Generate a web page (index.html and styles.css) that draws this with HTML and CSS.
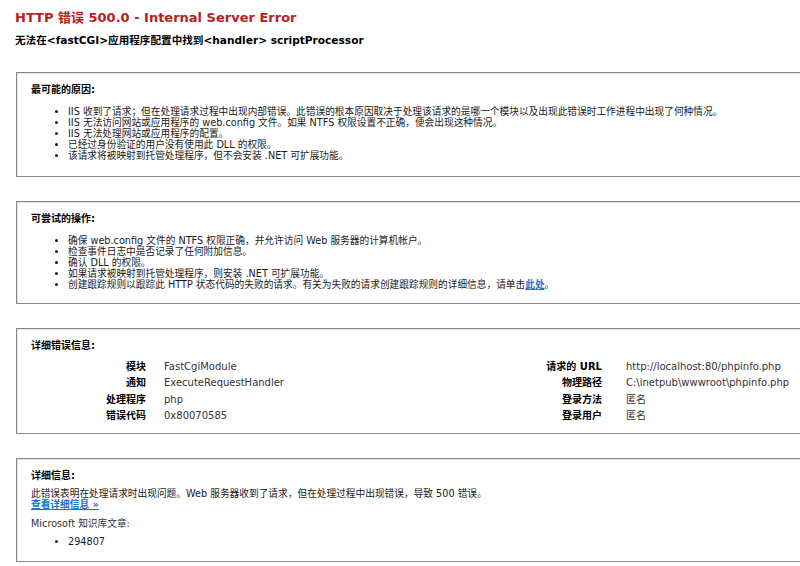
FILE: index.html
```html
<!DOCTYPE html>
<html lang="zh-CN">
<head>
<meta charset="utf-8">
<title>IIS 7.0 详细错误 - 500.0 - Internal Server Error</title>
<link rel="stylesheet" href="styles.css">
</head>
<body>
<div class="header">
  <h1 class="title">HTTP 错误 500.0 - Internal Server Error</h1>
  <h2 class="subtitle">无法在&lt;fastCGI&gt;应用程序配置中找到&lt;handler&gt; scriptProcessor</h2>
</div>
<div class="content">
  <section class="box box-causes">
    <h3 class="box-title">最可能的原因:</h3>
    <ul class="list">
      <li>IIS 收到了请求；但在处理请求过程中出现内部错误。此错误的根本原因取决于处理该请求的是哪一个模块以及出现此错误时工作进程中出现了何种情况。</li>
      <li>IIS 无法访问网站或应用程序的 web.config 文件。如果 NTFS 权限设置不正确，便会出现这种情况。</li>
      <li>IIS 无法处理网站或应用程序的配置。</li>
      <li>已经过身份验证的用户没有使用此 DLL 的权限。</li>
      <li>该请求将被映射到托管处理程序，但不会安装 .NET 可扩展功能。</li>
    </ul>
  </section>
  <section class="box box-actions">
    <h3 class="box-title">可尝试的操作:</h3>
    <ul class="list">
      <li>确保 web.config 文件的 NTFS 权限正确，并允许访问 Web 服务器的计算机帐户。</li>
      <li>检查事件日志中是否记录了任何附加信息。</li>
      <li>确认 DLL 的权限。</li>
      <li>如果请求被映射到托管处理程序，则安装 .NET 可扩展功能。</li>
      <li>创建跟踪规则以跟踪此 HTTP 状态代码的失败的请求。有关为失败的请求创建跟踪规则的详细信息，请单击<a class="link" href="#">此处</a>。</li>
    </ul>
  </section>
  <section class="box box-details">
    <h3 class="box-title">详细错误信息:</h3>
    <div class="details">
      <div class="label">模块</div><div class="value">FastCgiModule</div>
      <div class="label label-right">请求的 URL</div><div class="value value-right">http://localhost:80/phpinfo.php</div>
      <div class="label">通知</div><div class="value">ExecuteRequestHandler</div>
      <div class="label label-right">物理路径</div><div class="value value-right">C:\inetpub\wwwroot\phpinfo.php</div>
      <div class="label">处理程序</div><div class="value">php</div>
      <div class="label label-right">登录方法</div><div class="value value-right">匿名</div>
      <div class="label">错误代码</div><div class="value">0x80070585</div>
      <div class="label label-right">登录用户</div><div class="value value-right">匿名</div>
    </div>
  </section>
  <section class="box box-info">
    <h3 class="box-title">详细信息:</h3>
    <p class="info-text">此错误表明在处理请求时出现问题。Web 服务器收到了请求，但在处理过程中出现错误，导致 500 错误。</p>
    <p class="info-link"><a class="link" href="#">查看详细信息 »</a></p>
    <p class="kb">Microsoft 知识库文章:</p>
    <ul class="list kb-list">
      <li>294807</li>
    </ul>
  </section>
</div>
</body>
</html>
```
FILE: styles.css
```css
html, body {
  margin: 0;
  padding: 0;
  background: #ffffff;
  overflow: hidden;
}
body {
  font-family: "DejaVu Sans", Verdana, "Noto Sans CJK SC", sans-serif;
  font-size: 9.7px;
  color: #1a1a1a;
}
.header {
  padding: 10px 0 0 15px;
}
.title {
  margin: 0;
  font-size: 13px;
  line-height: 16px;
  font-weight: bold;
  color: #b5221b;
  letter-spacing: 0;
}
.subtitle {
  margin: 8px 0 0 0;
  font-size: 10.6px;
  line-height: 12px;
  font-weight: bold;
  color: #000;
}
.content {
  padding: 26px 0 0 16px;
  display: flex;
  flex-direction: column;
  gap: 24px;
}
.box {
  width: 820px;
  border: 1px solid #8a8a8a;
  box-shadow: inset 1px 1px 0 #e2e2e2;
  padding: 11px 14px 0 14px;
  box-sizing: border-box;
}
.box-causes { height: 105px; }
.box-actions { height: 103px; }
.box-details { height: 106px; }
.box-info { height: 104px; }
.box-title {
  margin: 0;
  font-size: 10px;
  line-height: 12px;
  font-weight: bold;
  color: #000;
}
.list {
  margin: 10px 0 0 0;
  padding: 0 0 0 37px;
  line-height: 11px;
}
.link {
  color: #1a6fd0;
  font-weight: bold;
  text-decoration: underline;
}
.details {
  margin-top: 9px;
  display: grid;
  grid-template-columns: 115px 280px 176px auto;
  row-gap: 4.8px;
  line-height: 11.5px;
  font-size: 10px;
}
.label {
  text-align: right;
  font-weight: bold;
  color: #000;
}
.value {
  padding-left: 18px;
  color: #333;
}
.value-right {
  padding-left: 24px;
}
.info-text {
  margin: 6px 0 0 0;
  line-height: 11px;
}
.info-link {
  margin: 0;
  line-height: 11px;
}
.kb {
  margin: 8px 0 0 0;
  line-height: 11px;
  color: #333;
}
.kb-list {
  margin-top: 7px;
}
```
